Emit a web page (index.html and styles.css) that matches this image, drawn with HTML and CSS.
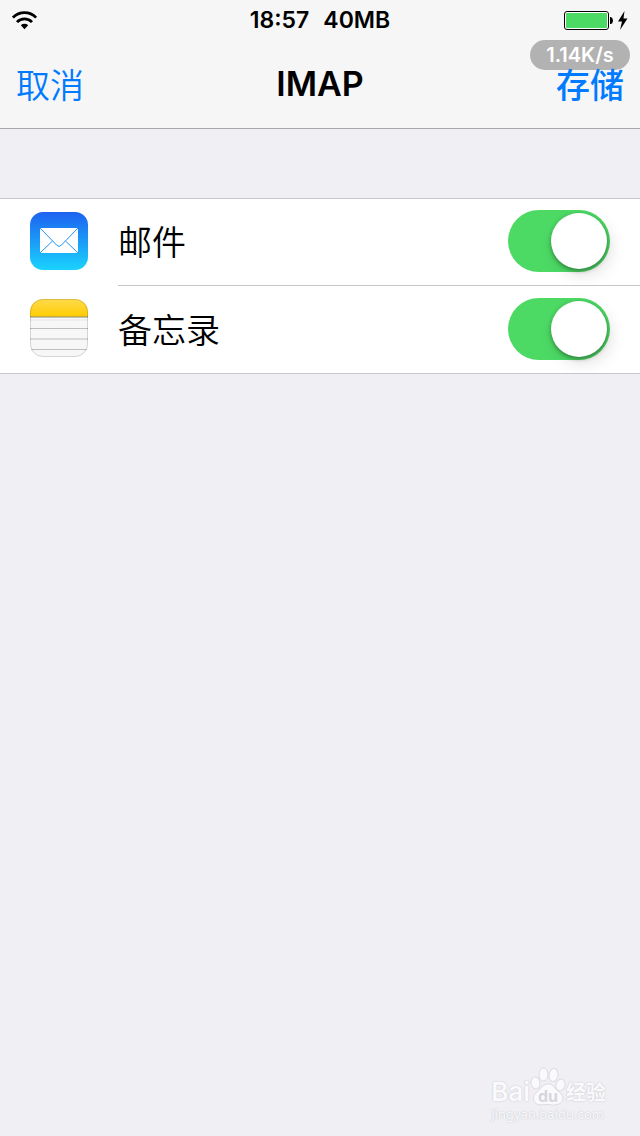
FILE: index.html
```
<!DOCTYPE html>
<html lang="zh-CN">
<head>
<meta charset="UTF-8">
<meta name="viewport" content="width=device-width, initial-scale=1.0">
<title>IMAP</title>
<link rel="stylesheet" href="styles.css">
</head>
<body>

<header class="header">
    <div class="status-bar">
        <svg class="wifi" viewBox="0 0 26 20" width="26" height="20" aria-hidden="true">
            <path d="M.9 7.6 A16 16 0 0 1 24.1 7.6" fill="none" stroke="#000" stroke-width="2.8"/>
            <path d="M5 12.1 A10.4 10.4 0 0 1 20 12.1" fill="none" stroke="#000" stroke-width="2.8"/>
            <path d="M8.8 15.2 A5.4 5.4 0 0 1 16.2 15.2 L12.5 19.2 Z"/>
        </svg>
        <div class="status-text">
            <span>18:57</span>
            <span>40MB</span>
        </div>
        <svg class="battery" viewBox="0 0 65 22" width="65" height="22" aria-hidden="true">
            <rect x="1.5" y="2.5" width="44" height="18" rx="2.5" fill="#fff" stroke="#000"/>
            <rect x="3" y="4" width="41" height="15" rx="1" fill="#4cd964"/>
            <path d="M47 8 h1 q2 1 2 3.5 t-2 3.5 h-1 z"/>
            <path d="M61.5 2 L55 12.5 H59 L57 21 L64.5 9.5 H60.5 Z"/>
        </svg>
    </div>
    <div class="speed">1.14K/s</div>
    <nav class="nav-bar">
        <button type="button" class="nav-button">取消</button>
        <h1 class="title">IMAP</h1>
        <button type="button" class="nav-button save">存储</button>
    </nav>
</header>

<main>
    <ul class="list">
        <li class="row">
            <svg class="row-icon" viewBox="0 0 58 58" width="58" height="58" aria-hidden="true">
                <defs>
                    <linearGradient id="mailBlue" x1="0" y1="0" x2="0" y2="1">
                        <stop offset="0" stop-color="#1d62f0"/>
                        <stop offset="1" stop-color="#1ad3fd"/>
                    </linearGradient>
                </defs>
                <rect width="58" height="58" rx="13" fill="url(#mailBlue)"/>
                <rect x="10" y="16" width="38" height="25" fill="#fff"/>
                <path d="M10 16 L26.5 33 Q29 36 31.5 33 L48 16 M10 41 L22.5 29 M48 41 L35.5 29" fill="none" stroke="#2195f7"/>
            </svg>
            <div class="row-body">
                <label for="mail">邮件</label>
                <input type="checkbox" class="switch" id="mail" checked>
            </div>
        </li>
        <li class="row">
            <svg class="row-icon" viewBox="0 0 58 58" width="58" height="58" aria-hidden="true">
                <defs>
                    <linearGradient id="noteYellow" x1="0" y1="0" x2="0" y2="1">
                        <stop offset="0" stop-color="#ffdb4c"/>
                        <stop offset="1" stop-color="#ffcc02"/>
                    </linearGradient>
                    <clipPath id="noteShape"><rect width="58" height="58" rx="13"/></clipPath>
                </defs>
                <g clip-path="url(#noteShape)">
                    <rect width="58" height="58" fill="#f7f7f7"/>
                    <rect width="58" height="18" fill="url(#noteYellow)"/>
                    <path d="M0 18 H58" stroke="#8d8875"/>
                    <path d="M0 21 H58" stroke="#dedede" stroke-dasharray="2 1"/>
                    <path d="M0 29.5 H58 M0 40 H58 M0 50.5 H58" stroke="#bdbdbd"/>
                </g>
                <rect x=".5" y=".5" width="57" height="57" rx="12.5" fill="none" stroke="#000" stroke-opacity=".14"/>
            </svg>
            <div class="row-body">
                <label for="notes">备忘录</label>
                <input type="checkbox" class="switch" id="notes" checked>
            </div>
        </li>
    </ul>
</main>

<footer class="watermark">
    <div class="brand">
        <span class="brand-name">Bai</span>
        <div class="paw">
            <svg viewBox="0 0 36 40" width="36" height="40" aria-hidden="true">
                <g fill="#fafafc" stroke="#dcdce0">
                    <ellipse cx="5.5" cy="17" rx="4.5" ry="6" transform="rotate(-12 5.5 17)"/>
                    <ellipse cx="13.5" cy="8.5" rx="4.5" ry="6.5"/>
                    <ellipse cx="23.5" cy="9" rx="4.5" ry="6.5" transform="rotate(10 23.5 9)"/>
                    <ellipse cx="30.5" cy="19" rx="4.5" ry="6" transform="rotate(15 30.5 19)"/>
                    <path d="M18 18 C12 18 11 23 7 26 C1 30 3 38.5 10 39 C14 39 16 38 19 38.5 C22 39.5 33 40 33 32 C32 26 26 25 24 21 C22 18 20 18 18 18 Z"/>
                </g>
            </svg>
            <span class="paw-text">du</span>
        </div>
        <span class="brand-cn">经验</span>
    </div>
    <div class="site">jingyan.baidu.com</div>
</footer>

</body>
</html>
```

FILE: styles.css
```
* {
    box-sizing: border-box;
}

body {
    margin: 0;
    min-height: 100vh;
    display: flex;
    flex-direction: column;
    background-color: #efeff4;
    color: #000;
    font-family: Inter, "Noto Sans CJK SC", sans-serif;
}

.header {
    position: relative;
    background-color: #f6f6f6;
    border-bottom: 1px solid #a7a7aa;
}

.status-bar {
    display: grid;
    grid-template-columns: 1fr auto 1fr;
    align-items: center;
    height: 40px;
    padding: 0 12px;
}

.status-text {
    display: flex;
    gap: 14px;
    font-size: 23px;
    font-weight: 600;
    line-height: 40px;
}

.battery {
    justify-self: end;
}

.nav-bar {
    position: relative;
    display: grid;
    grid-template-columns: 1fr auto 1fr;
    align-items: center;
    height: 88px;
    padding: 0 16px;
}

.nav-button {
    justify-self: start;
    padding: 0;
    border: none;
    background: none;
    color: #007aff;
    font-family: "Noto Sans CJK SC", sans-serif;
    font-size: 34px;
    font-weight: 350;
    line-height: 48px;
    cursor: pointer;
}

.save {
    justify-self: end;
    font-weight: 500;
}

.title {
    margin: 0;
    font-size: 34px;
    font-weight: 600;
    line-height: 48px;
}

.speed {
    position: absolute;
    top: 40px;
    right: 10px;
    width: 100px;
    border-radius: 15px;
    background-color: #b2b2b2;
    color: #fff;
    font-size: 20px;
    font-weight: 600;
    line-height: 30px;
    text-align: center;
}

.list {
    margin: 69px 0 0;
    padding: 0;
    list-style: none;
    background-color: #fff;
    border-top: 1px solid #c8c7cc;
    border-bottom: 1px solid #c8c7cc;
}

.row {
    display: flex;
    align-items: center;
    gap: 30px;
    padding-left: 30px;
}

.row-icon {
    flex: none;
    margin-bottom: 3px;
}

.row-body {
    flex: 1;
    display: flex;
    align-items: center;
    justify-content: space-between;
    min-height: 87px;
    padding: 0 30px 2px 0;
    border-bottom: 1px solid #c8c7cc;
    font-family: "Noto Sans CJK SC", sans-serif;
    font-size: 34px;
    font-weight: 350;
    line-height: 48px;
}

.row:last-child .row-body {
    border-bottom: none;
}

.switch {
    appearance: none;
    width: 102px;
    height: 62px;
    margin: 0;
    padding: 3px;
    border-radius: 31px;
    background-color: #e5e5ea;
    cursor: pointer;
}

.switch::before {
    content: "";
    display: block;
    width: 56px;
    height: 56px;
    border-radius: 50%;
    background-color: #fff;
    box-shadow: 0 2px 4px rgba(0, 0, 0, 0.35), 4px 6px 16px rgba(0, 0, 0, 0.12);
}

.switch:checked {
    background-color: #4cd964;
}

.switch:checked::before {
    margin-left: auto;
}

.watermark {
    align-self: flex-end;
    margin-top: auto;
    padding: 0 34px 14px 0;
    color: #fafafc;
    text-shadow: 0 0 1px #c8c8ce, 0 0 2px #d4d4d9;
}

.brand {
    display: flex;
    align-items: flex-end;
    height: 40px;
}

.brand-name {
    font-size: 26px;
    font-weight: 600;
    line-height: 28px;
}

.paw {
    position: relative;
    height: 40px;
}

.paw-text {
    position: absolute;
    left: 0;
    right: 0;
    bottom: 1px;
    color: #d6d6dc;
    font-size: 16px;
    font-weight: bold;
    line-height: 18px;
    text-align: center;
    text-shadow: none;
}

.brand-cn {
    font-size: 20px;
    font-weight: bold;
    line-height: 26px;
}

.site {
    font-family: "Noto Sans", sans-serif;
    font-size: 13px;
    line-height: 16px;
}
```
